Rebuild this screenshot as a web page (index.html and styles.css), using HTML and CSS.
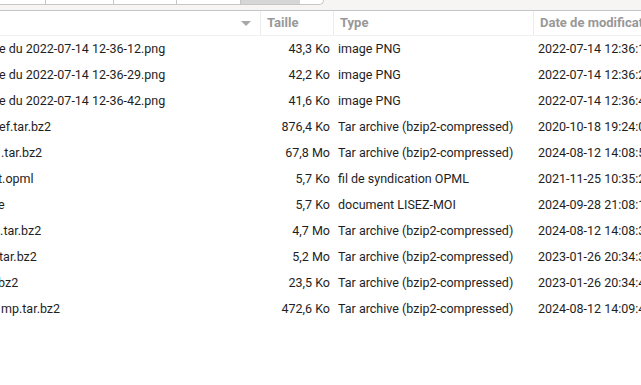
FILE: index.html
```html
<!DOCTYPE html>
<html lang="fr">
<head>
  <meta charset="UTF-8" />
  <meta name="viewport" content="width=device-width, initial-scale=1.0"/>
  <title>Fichiers</title>
  <link rel="stylesheet" href="styles.css">
</head>
<body>
  <div class="toolbar">
    <div class="pathbar">
      <span class="crumb w1"></span>
      <span class="crumb w2"></span>
      <span class="crumb w3"></span>
      <span class="crumb w4"></span>
      <span class="crumb w5 active"></span>
      <span class="crumb w6 last"></span>
    </div>
  </div>

  <div class="list">
    <div class="row head">
      <div class="cell name"><span class="sort-arrow"></span></div>
      <div class="cell size">Taille</div>
      <div class="cell type">Type</div>
      <div class="cell date">Date de modification</div>
    </div>

    <div class="row">
      <div class="cell name"><span class="cut1">e du 2022-07-14 12-36-12.png</span></div>
      <div class="cell size">43,3 Ko</div>
      <div class="cell type">image PNG</div>
      <div class="cell date">2022-07-14 12:36:12</div>
    </div>
    <div class="row">
      <div class="cell name"><span class="cut1">e du 2022-07-14 12-36-29.png</span></div>
      <div class="cell size">42,2 Ko</div>
      <div class="cell type">image PNG</div>
      <div class="cell date">2022-07-14 12:36:29</div>
    </div>
    <div class="row">
      <div class="cell name"><span class="cut1">e du 2022-07-14 12-36-42.png</span></div>
      <div class="cell size">41,6 Ko</div>
      <div class="cell type">image PNG</div>
      <div class="cell date">2022-07-14 12:36:42</div>
    </div>
    <div class="row">
      <div class="cell name"><span class="cut1">ef.tar.bz2</span></div>
      <div class="cell size">876,4 Ko</div>
      <div class="cell type">Tar archive (bzip2-compressed)</div>
      <div class="cell date">2020-10-18 19:24:05</div>
    </div>
    <div class="row">
      <div class="cell name"><span class="cut0">.tar.bz2</span></div>
      <div class="cell size">67,8 Mo</div>
      <div class="cell type">Tar archive (bzip2-compressed)</div>
      <div class="cell date">2024-08-12 14:08:51</div>
    </div>
    <div class="row">
      <div class="cell name"><span class="cut2">t.opml</span></div>
      <div class="cell size">5,7 Ko</div>
      <div class="cell type">fil de syndication OPML</div>
      <div class="cell date">2021-11-25 10:35:27</div>
    </div>
    <div class="row">
      <div class="cell name"><span class="cut2">e</span></div>
      <div class="cell size">5,7 Ko</div>
      <div class="cell type">document LISEZ-MOI</div>
      <div class="cell date">2024-09-28 21:08:14</div>
    </div>
    <div class="row">
      <div class="cell name"><span class="cut4">t.tar.bz2</span></div>
      <div class="cell size">4,7 Mo</div>
      <div class="cell type">Tar archive (bzip2-compressed)</div>
      <div class="cell date">2024-08-12 14:08:33</div>
    </div>
    <div class="row">
      <div class="cell name"><span class="cut1">tar.bz2</span></div>
      <div class="cell size">5,2 Mo</div>
      <div class="cell type">Tar archive (bzip2-compressed)</div>
      <div class="cell date">2023-01-26 20:34:32</div>
    </div>
    <div class="row">
      <div class="cell name"><span class="cut2">bz2</span></div>
      <div class="cell size">23,5 Ko</div>
      <div class="cell type">Tar archive (bzip2-compressed)</div>
      <div class="cell date">2023-01-26 20:34:41</div>
    </div>
    <div class="row">
      <div class="cell name"><span class="cut0">mp.tar.bz2</span></div>
      <div class="cell size">472,6 Ko</div>
      <div class="cell type">Tar archive (bzip2-compressed)</div>
      <div class="cell date">2024-08-12 14:09:44</div>
    </div>
  </div>
</body>
</html>
```

FILE: styles.css
```css
body {
  margin: 0;
  font-family: Roboto, "Liberation Sans", sans-serif;
  font-size: 12.5px;
  color: #1e1e1e;
  background: #ffffff;
  overflow: hidden;
  width: 641px;
  height: 385px;
}

/* top bar with the path buttons */
.toolbar {
  height: 10px;
  background: #f6f5f4;
  border-bottom: 1px solid #c6c6c6;
}

.pathbar {
  display: flex;
  height: 5px;
}

.crumb {
  background: #ffffff;
  border-bottom: 1px solid #c6c6c6;
  border-right: 1px solid #c6c6c6;
}

.w1 { width: 45px; }
.w2 { width: 67px; }
.w3 { width: 62px; }
.w4 { width: 63px; }
.w5 { width: 59px; }
.w6 { width: 23px; }

.crumb.active {
  background: #d6d6d6;
  border-right: none;
}

.crumb.last {
  border-bottom-right-radius: 6px;
}

/* file list */
.row {
  display: grid;
  grid-template-columns: 260px 73px 200px 1fr;
  height: 26px;
  line-height: 26px;
  white-space: nowrap;
}

.cell {
  overflow: hidden;
}

.row.head {
  height: 24px;
  line-height: 23px;
  border-bottom: 1px solid #f0f0f0;
  color: #989898;
  font-weight: bold;
  font-size: 13px;
}

.row.head .cell {
  border-left: 1px solid #ececec;
  padding-left: 6px;
}

.row.head .cell.name {
  border-left: none;
  position: relative;
}

.row.head .cell.size {
  text-align: left;
  padding-right: 0;
}

.sort-arrow {
  position: absolute;
  left: 241px;
  top: 10px;
  width: 0;
  height: 0;
  border-left: 5px solid transparent;
  border-right: 5px solid transparent;
  border-top: 5px solid #a8a8a8;
}

.name span {
  display: inline-block;
}

.cut0 { margin-left: 1px; }
.cut1 { margin-left: -1px; }
.cut2 { margin-left: -2px; }
.cut4 { margin-left: -4px; }

.size {
  text-align: right;
  padding-right: 3px;
}

.type {
  padding-left: 5px;
}

.date {
  padding-left: 5px;
  overflow: visible;
}
```
